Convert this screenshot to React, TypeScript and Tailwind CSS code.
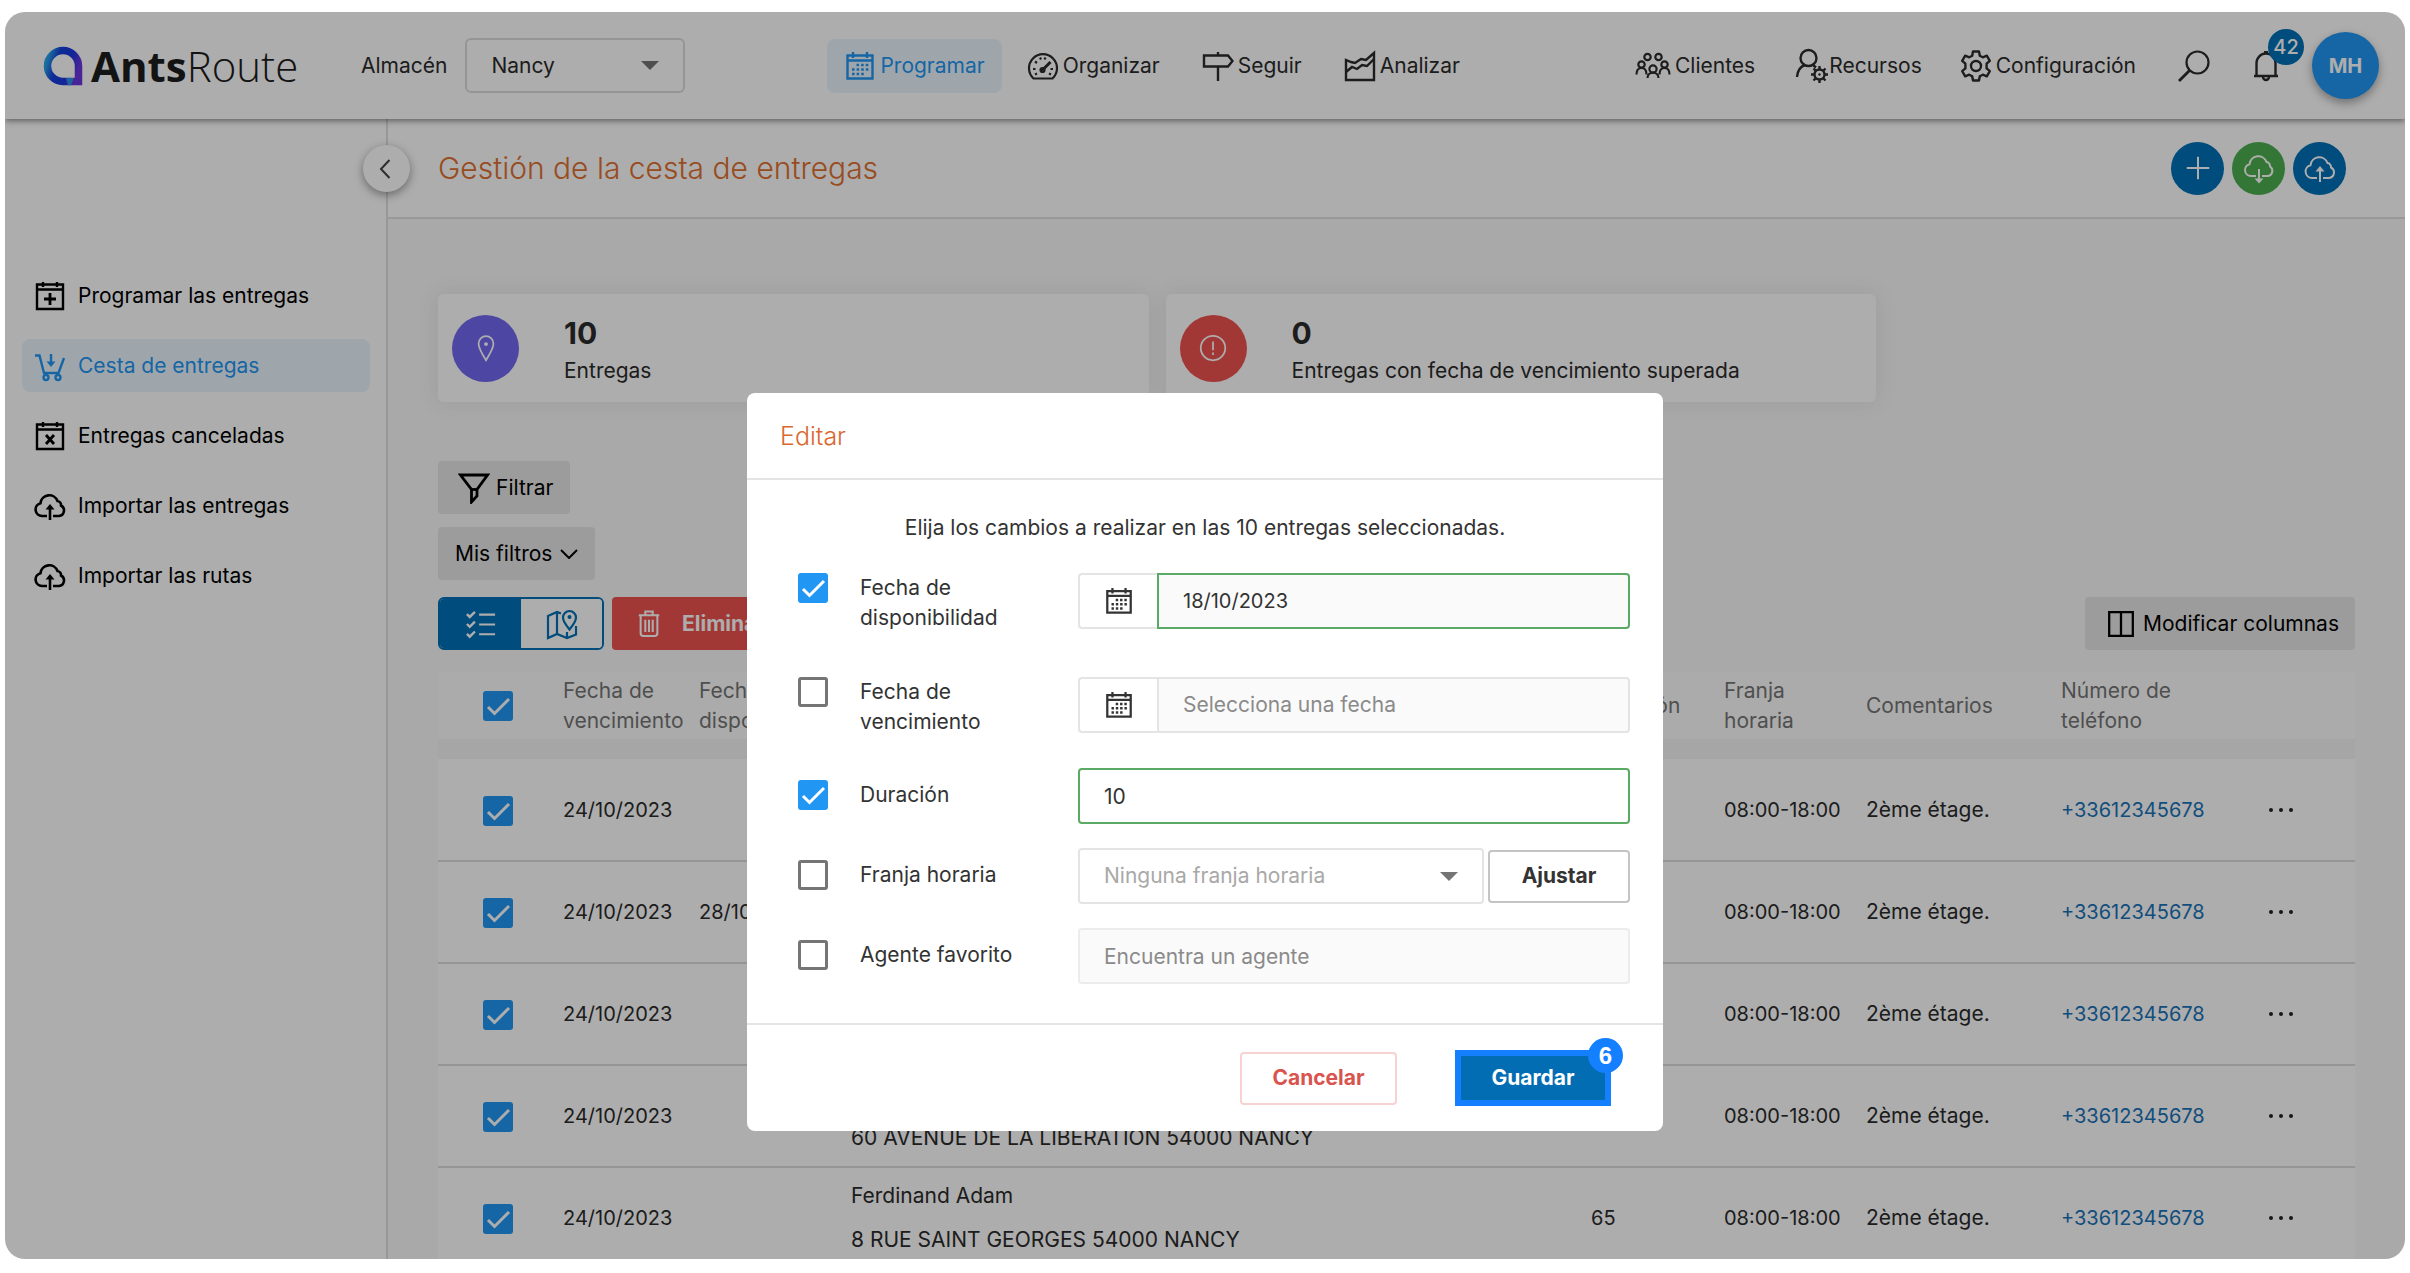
import { useState } from "react";
import type { ReactNode } from "react";
import clsx from "clsx";

type IconProps = { className?: string };

function Svg({ className, children, box = "0 0 32 32", width = 2.4 }: IconProps & { children: ReactNode; box?: string; width?: number }) {
  return (
    <svg viewBox={box} fill="none" stroke="currentColor" strokeWidth={width} className={clsx("shrink-0", className)} aria-hidden="true">
      {children}
    </svg>
  );
}

const CalendarIcon = ({ className }: IconProps) => (
  <Svg className={className}>
    <path d="M3.5 5.5h25v23h-25zM3.5 10.5h25" />
    <path d="M9 2v6M23 2v6" />
    <path d="M12.5 15h13M8 19.500h17.500M8 24h13" strokeWidth="2.6" strokeDasharray="2.600 2" />
  </Svg>
);

const CalendarPlusIcon = ({ className }: IconProps) => (
  <Svg className={className}>
    <path d="M3 4.500h26v24.500h-26zM3 9.500h26M9 2v5M23 2v5" />
    <path d="M16 13v12M10 19h12" strokeWidth="2.800" />
  </Svg>
);

const CalendarCrossIcon = ({ className }: IconProps) => (
  <Svg className={className}>
    <path d="M3 4.500h26v24.500h-26zM3 9.500h26M9 2v5M23 2v5" />
    <path d="M12 15l8 9M20 15l-8 9" strokeWidth="2.800" />
  </Svg>
);

const CartIcon = ({ className }: IconProps) => (
  <Svg className={className}>
    <path d="M1 5.500h4.500L10 23h14.500L30 8" />
    <path d="M17 4v11" />
    <path d="M12.500 11.500h9L17 17z" fill="currentColor" stroke="none" />
    <circle cx="12" cy="27.500" r="2.500" />
    <circle cx="24" cy="27.500" r="2.500" />
  </Svg>
);

const CloudUpIcon = ({ className, thin }: IconProps & { thin?: boolean }) => (
  <Svg className={className} width={thin ? 2 : 2.6}>
    <path d="M13 26H8a6.500 6.500 0 0 1-1.500-12.800A8.800 8.800 0 0 1 23.500 11a4 4 0 0 1 3.500 4.500A5.600 5.600 0 0 1 25 26h-6" />
    <path d="M16 30V16" />
    <path d="M11.500 19.500L16 14l4.500 5.500z" fill="currentColor" stroke="none" />
  </Svg>
);

const CloudDownIcon = ({ className }: IconProps) => (
  <Svg className={className} width={2}>
    <path d="M13 24H8a6 6 0 0 1-1.500-11.800A8.800 8.800 0 0 1 23.500 10a4 4 0 0 1 3.500 4.500A5.200 5.200 0 0 1 25 24h-6" />
    <path d="M16 17v11" />
    <path d="M11.500 26.500h9L16 31.500z" fill="currentColor" stroke="none" />
  </Svg>
);

const GaugeIcon = ({ className }: IconProps) => (
  <Svg className={className} width={2.2}>
    <path d="M6.500 28.500A14 14 0 1 1 25.500 28.500z" strokeLinejoin="round" />
    <path d="M6 19h2.500M8 11.500l2 1.500M13 7.500l1 2M18.500 7.500l-1 2M26 19h-2.500M8 24.500l2-1M24 24.500l-2-1" />
    <path d="M15 20.500L23.500 12" strokeWidth="3" />
    <circle cx="15.500" cy="20" r="2" fill="currentColor" />
  </Svg>
);

const SignIcon = ({ className }: IconProps) => (
  <Svg className={className} width={2.4}>
    <path d="M2 5.500h24l4.500 5.500-4.500 5.500h-24z" />
    <path d="M16 2v4M16 17v14" />
  </Svg>
);

const ChartIcon = ({ className }: IconProps) => (
  <Svg className={className} width={2.4}>
    <path d="M2 10v20h28V3l-8 7-5-1-6 4-4-1z" />
    <path d="M2 22l6-5 5 2 5-4 5 1 7-7" />
  </Svg>
);

const PeopleIcon = ({ className }: IconProps) => (
  <Svg className={className} box="0 0 36 28" width={2.2}>
    <circle cx="12.500" cy="5" r="3.200" />
    <circle cx="23.500" cy="5" r="3.200" />
    <circle cx="6.500" cy="12.500" r="3.200" />
    <circle cx="29.500" cy="12.500" r="3.200" />
    <circle cx="18" cy="17" r="3.600" />
    <path d="M1.500 22.500c0-4 2-6.500 5-6.500s5 2.500 5 6.500M24.500 22.500c0-4 2-6.500 5-6.500s5 2.500 5 6.500M12.500 26c0-3.500 2.500-5.400 5.500-5.400s5.500 1.900 5.500 5.400" />
  </Svg>
);

const UserGearIcon = ({ className }: IconProps) => (
  <Svg className={className} box="0 0 34 36" width={2.4}>
    <circle cx="13.500" cy="10" r="8" />
    <path d="M2 29c.5-6 3.500-10.500 8-12M18 17l3 2.500" />
    <circle cx="24.500" cy="26.500" r="5" />
    <circle cx="24.500" cy="26.500" r="1.200" fill="currentColor" stroke="none" />
    <path d="M24.500 18v3M24.500 32v3M16 26.500h3M30 26.500h3M18.500 20.500l2 2M28.500 30.500l2 2M30.500 20.500l-2 2M20.500 30.500l-2 2" />
  </Svg>
);

const GearIcon = ({ className }: IconProps) => (
  <Svg className={className} width={2.4}>
    <path
      d="M13 1.500h6l.8 4.200 3 1.600 4-1.600 3 5.100-3.200 2.800v4.800l3.200 2.800-3 5.100-4-1.600-3 1.600-.8 4.200h-6l-.8-4.200-3-1.600-4 1.600-3-5.100 3.200-2.800v-4.800l-3.200-2.800 3-5.100 4 1.600 3-1.600z"
      strokeLinejoin="round"
    />
    <circle cx="16" cy="16" r="5" />
  </Svg>
);

const SearchIcon = ({ className }: IconProps) => (
  <Svg className={className} width={2.2}>
    <circle cx="19.500" cy="12.500" r="11" />
    <path d="M11.500 20.500L1 31" strokeWidth="2.800" />
  </Svg>
);

const BellIcon = ({ className }: IconProps) => (
  <Svg className={className} width={2.4}>
    <path d="M4 26h24M6.500 26V13a9.500 9.500 0 0 1 19 0v13" />
    <path d="M16 1v3" strokeWidth="4" />
    <path d="M13 27a3 3 0 1 0 6 0" />
  </Svg>
);

const FunnelIcon = ({ className }: IconProps) => (
  <Svg className={className} width={2.8}>
    <path d="M2.500 3h27L19 17.500V24l-5.500 6V17.500z" />
    <path d="M13.500 17.500H19" />
  </Svg>
);

const ListIcon = ({ className }: IconProps) => (
  <Svg className={className} width={2.6}>
    <path d="M1 5.500l3 3L9.500 3M1 16l3 3 5.500-5.500M1 26.500l3 3L9.500 24" />
    <path d="M14 6h17M14 16.500h17M14 27h17" strokeWidth="2.200" />
  </Svg>
);

const MapIcon = ({ className }: IconProps) => (
  <Svg className={className} width={2.2}>
    <path d="M15 5.500l-4-1.500-9 4v22l9-4 10 4 9-3.500V18M11 4v22M21 30v-6" />
    <path d="M23.500 21.500C19 16 17 12.500 17 9.500a6.500 6.500 0 0 1 13 0c0 3-2 6.500-6.500 12z" />
    <circle cx="23.500" cy="9" r="2" fill="currentColor" stroke="none" />
  </Svg>
);

const TrashIcon = ({ className }: IconProps) => (
  <Svg className={className} box="0 0 28 32" width={2.2}>
    <path d="M3 6.500h22M10 6V2.500h8V6M5 7v19a3 3 0 0 0 3 3h12a3 3 0 0 0 3-3V7" />
    <path d="M10 11.500v13M14 11.500v13M18 11.500v13" />
  </Svg>
);

const PinIcon = ({ className }: IconProps) => (
  <Svg className={className} width={2}>
    <path d="M16 30C10.500 21 7.500 16 7.500 11a8.500 8.500 0 0 1 17 0c0 5-3 10-8.500 19z" />
    <circle cx="16" cy="11.500" r="2.200" fill="currentColor" stroke="none" />
  </Svg>
);

const AlertIcon = ({ className }: IconProps) => (
  <Svg className={className} width={2}>
    <circle cx="16" cy="16" r="14" />
    <path d="M16 8.500v10M16 21v3" />
  </Svg>
);

const ColumnsIcon = ({ className }: IconProps) => (
  <Svg className={className} width={2.6}>
    <path d="M2.500 2.500h27v27h-27zM16 2.500v27" />
  </Svg>
);

function Logo() {
  return (
    <a href="#" className="flex w-[318px] items-center gap-2 text-[#1c1c1c]">
      <svg viewBox="0 0 40 40" className="size-10 shrink-0" aria-hidden="true">
        <defs>
          <linearGradient id="ring" x1="0" y1="0.3" x2="1" y2="0.6">
            <stop offset="0" stopColor="#2a9fe8" />
            <stop offset="0.300" stopColor="#1440dc" />
            <stop offset="0.700" stopColor="#1a38e0" />
            <stop offset="1" stopColor="#6a35e0" />
          </linearGradient>
        </defs>
        <path d="M20 4.500A15.500 15.500 0 0 0 20 35.500H35.500V20A15.500 15.500 0 0 0 20 4.500z" fill="none" stroke="url(#ring)" strokeWidth="7.500" />
        <path d="M23 32h8l-3 7.200h-3z" fill="#2f8fe6" />
      </svg>
      <span className="font-['Open_Sans'] text-[42px] leading-none font-bold">
        Ants<span className="font-light">Route</span>
      </span>
    </a>
  );
}

const Caret = ({ className }: IconProps) => (
  <svg viewBox="0 0 18 9" className={clsx("pointer-events-none h-[9px] w-[18px]", className)} aria-hidden="true">
    <path d="M0 0h18l-9 9z" fill="#757575" />
  </svg>
);

function Checkbox({ id, label, defaultChecked }: { id: string; label?: string; defaultChecked?: boolean }) {
  return (
    <span className="relative inline-block size-[30px] shrink-0 align-middle">
      <input
        id={id}
        type="checkbox"
        aria-label={label}
        defaultChecked={defaultChecked}
        className="peer block size-[30px] appearance-none rounded-[3px] border-3 border-[#757575] checked:border-[#2196f3] checked:bg-[#2196f3]"
      />
      <svg viewBox="0 0 30 30" className="pointer-events-none absolute inset-0 hidden peer-checked:block" aria-hidden="true">
        <path d="M5 16l6.500 6.500L26 8" fill="none" stroke="#fff" strokeWidth="3" />
      </svg>
    </span>
  );
}

const mainNav = [
  { label: "Programar", icon: CalendarIcon, active: true },
  { label: "Organizar", icon: GaugeIcon },
  { label: "Seguir", icon: SignIcon },
  { label: "Analizar", icon: ChartIcon },
];

const sideNav = [
  { label: "Programar las entregas", icon: CalendarPlusIcon },
  { label: "Cesta de entregas", icon: CartIcon, active: true },
  { label: "Entregas canceladas", icon: CalendarCrossIcon },
  { label: "Importar las entregas", icon: CloudUpIcon },
  { label: "Importar las rutas", icon: CloudUpIcon },
];

const deliveries = [
  { due: "24/10/2023" },
  { due: "24/10/2023", available: "28/10/2023" },
  { due: "24/10/2023" },
  { due: "24/10/2023", address: "60 AVENUE DE LA LIBERATION 54000 NANCY" },
  { due: "24/10/2023", name: "Ferdinand Adam", address: "8 RUE SAINT GEORGES 54000 NANCY", duration: "65" },
];

function Header() {
  return (
    <header className="relative z-10 flex h-[107px] shrink-0 items-center bg-white pr-[26px] pl-[38px] shadow-[0_2px_6px_rgba(0,0,0,0.45)]">
      <Logo />
      <label htmlFor="warehouse" className="mr-[18px]">Almacén</label>
      <div className="relative mr-[142px]">
        <select id="warehouse" className="h-[55px] w-[220px] appearance-none rounded-md border-2 border-[#dcdcdc] bg-white pl-6">
          <option>Nancy</option>
        </select>
        <Caret className="absolute top-[23px] right-[26px]" />
      </div>
      <nav className="flex items-center gap-2">
        {mainNav.map(({ label, icon: Icon, active }) => (
          <a
            key={label}
            href="#"
            className={clsx("flex h-[54px] items-center gap-1 rounded-lg px-[17px]", active && "bg-[#ebf5fd] text-[#2196f3]")}
          >
            <Icon className="size-8" />
            {label}
          </a>
        ))}
      </nav>
      <nav className="ml-auto flex items-center">
        <a href="#" className="mr-10 flex items-center gap-1"><PeopleIcon className="h-7 w-9" />Clientes</a>
        <a href="#" className="mr-[38px] flex items-center"><UserGearIcon className="h-9 w-[34px]" />Recursos</a>
        <a href="#" className="mr-[42px] flex items-center gap-1"><GearIcon className="size-8" />Configuración</a>
      </nav>
      <button aria-label="Buscar" className="mr-10"><SearchIcon className="size-8" /></button>
      <button aria-label="Notificaciones" className="relative mr-[30px]">
        <BellIcon className="size-8" />
        <span className="absolute -top-[21px] -right-[22px] flex size-9 items-center justify-center rounded-full bg-[#0170b7] text-xl font-medium text-white">42</span>
      </button>
      <button className="size-[67px] rounded-full bg-[#2196f3] text-xl font-bold text-white shadow-[0_4px_10px_rgba(0,0,0,0.35)]">MH</button>
    </header>
  );
}

function Sidebar() {
  return (
    <aside className="relative w-[383px] shrink-0 border-r-2 border-[#e0e0e0] bg-white pt-[150px] pr-4 pl-[17px]">
      <button
        aria-label="Contraer"
        className="absolute top-[26px] -right-6 z-10 flex size-[47px] items-center justify-center rounded-full bg-white shadow-[0_3px_10px_rgba(0,0,0,0.4)]"
      >
        <svg viewBox="0 0 12 20" className="mr-1 h-5 w-3" fill="none" stroke="#444" strokeWidth="2"><path d="M10.500 1L2 10l8.500 9" /></svg>
      </button>
      <nav className="flex flex-col gap-[17px]">
        {sideNav.map(({ label, icon: Icon, active }) => (
          <a
            key={label}
            href="#"
            className={clsx("flex h-[53px] items-center gap-3 rounded-lg pl-3", active ? "bg-[#ebf5fd] text-[#2196f3]" : "text-black")}
          >
            <Icon className="size-8" />
            {label}
          </a>
        ))}
      </nav>
    </aside>
  );
}

function StatCard({ icon, value, label, color }: { icon: ReactNode; value: string; label: string; color: string }) {
  return (
    <div className="flex h-[108px] items-center rounded-md bg-white pl-[14px] shadow-[0_0_24px_rgba(0,0,0,0.08)]">
      <div className={clsx("flex size-[67px] items-center justify-center rounded-full text-white", color)}>{icon}</div>
      <div className="ml-[45px] pt-2">
        <div className="mb-[2px] text-3xl leading-9 font-bold">{value}</div>
        <div className="leading-9">{label}</div>
      </div>
    </div>
  );
}

function DeliveryTable() {
  return (
    <table className="mt-[22px] w-full table-fixed text-left">
      <colgroup>
        <col className="w-[125px]" />
        <col className="w-[136px]" />
        <col className="w-[152px]" />
        <col />
        <col className="w-[133px]" />
        <col className="w-[142px]" />
        <col className="w-[195px]" />
        <col className="w-[206px]" />
        <col className="w-[88px]" />
      </colgroup>
      <thead>
        <tr className="h-[67px] bg-[#fdfdfd] leading-[30px] text-[#757575] *:font-normal">
          <th className="pl-[45px]"><Checkbox id="all" label="Seleccionar todo" defaultChecked /></th>
          <th>Fecha de<br />vencimiento</th>
          <th>Fecha de<br />disponibilidad</th>
          <th />
          <th>Duración</th>
          <th>Franja<br />horaria</th>
          <th>Comentarios</th>
          <th>Número de<br />teléfono</th>
          <th />
        </tr>
      </thead>
      <tbody>
        <tr className="h-5 bg-[#f5f5f5]"><td colSpan={9} /></tr>
        {deliveries.map((d, i) => (
          <tr key={i} className="h-[102px] border-b-2 border-[#dcdcdc] bg-white">
            <td className="pl-[45px]"><Checkbox id={`row-${i}`} label={`Seleccionar entrega ${i + 1}`} defaultChecked /></td>
            <td className="text-xl">{d.due}</td>
            <td className="text-xl">{d.available}</td>
            <td className="leading-[44px] whitespace-nowrap">
              <div className="h-11">{d.name}</div>
              <div className="h-11">{d.address}</div>
            </td>
            <td className="text-xl">{d.duration}</td>
            <td className="text-xl">08:00-18:00</td>
            <td>2ème étage.</td>
            <td className="text-xl"><a href="tel:+33612345678" className="text-[#1a73b8]">+33612345678</a></td>
            <td>
              <button aria-label="Acciones" className="block">
                <svg viewBox="0 0 28 6" className="h-[6px] w-7" fill="#222"><circle cx="4" cy="3" r="2" /><circle cx="14" cy="3" r="2" /><circle cx="24" cy="3" r="2" /></svg>
              </button>
            </td>
          </tr>
        ))}
      </tbody>
    </table>
  );
}

const greyButton = "flex h-[53px] items-center rounded-sm bg-[#e6e6e6] text-black";

function Basket() {
  const [view, setView] = useState("list");

  return (
    <main className="flex min-w-0 flex-1 flex-col bg-[#f9f9f9]">
      <div className="flex h-[100px] shrink-0 items-center gap-2 border-b-2 border-[#e0e0e0] bg-white pr-[59px] pl-[50px]">
        <h1 className="mr-auto text-3xl font-light text-[#e0702f]">Gestión de la cesta de entregas</h1>
        <button aria-label="Añadir" className="flex size-[53px] items-center justify-center rounded-full bg-[#0170b7] text-white">
          <Svg className="size-6" width={2.6}><path d="M16 1v30M1 16h30" /></Svg>
        </button>
        <button aria-label="Descargar" className="flex size-[53px] items-center justify-center rounded-full bg-[#4caf50] text-white"><CloudDownIcon className="size-8" /></button>
        <button aria-label="Subir" className="flex size-[53px] items-center justify-center rounded-full bg-[#0170b7] text-white"><CloudUpIcon thin className="size-8" /></button>
      </div>

      <div className="pt-[75px] pr-[50px] pl-[50px]">
        <div className="grid grid-cols-[40fr_40fr_26fr] gap-[17px]">
          <StatCard icon={<PinIcon className="size-7" />} value="10" label="Entregas" color="bg-[#7367f0]" />
          <StatCard icon={<AlertIcon className="size-7" />} value="0" label="Entregas con fecha de vencimiento superada" color="bg-[#ef5350]" />
        </div>

        <div className="mt-[59px] flex flex-col items-start gap-[13px]">
          <button className={clsx(greyButton, "gap-[6px] pr-[17px] pl-5")}><FunnelIcon className="size-8" />Filtrar</button>
          <button className={clsx(greyButton, "gap-2 px-[17px]")}>
            Mis filtros
            <svg viewBox="0 0 18 10" className="h-[10px] w-[18px]" fill="none" stroke="currentColor" strokeWidth="2"><path d="M1 1l8 8 8-8" /></svg>
          </button>
        </div>

        <div className="mt-[17px] flex">
          <div className="mr-2 flex h-[53px] w-[166px] overflow-hidden rounded-md border-2 border-[#0170b7]">
            <button
              aria-label="Lista"
              onClick={() => setView("list")}
              className={clsx("flex flex-1 items-center justify-center", view === "list" ? "bg-[#0170b7] text-white" : "text-[#0170b7]")}
            >
              <ListIcon className="size-[30px]" />
            </button>
            <button
              aria-label="Mapa"
              onClick={() => setView("map")}
              className={clsx("flex flex-1 items-center justify-center", view === "map" ? "bg-[#0170b7] text-white" : "bg-white text-[#0170b7]")}
            >
              <MapIcon className="size-8" />
            </button>
          </div>
          <button className="flex h-[53px] items-center gap-5 rounded-sm bg-[#ef5350] px-6 font-bold text-white"><TrashIcon className="h-[30px] w-[26px]" />Eliminar</button>
          <button className={clsx(greyButton, "ml-auto gap-2 pr-4 pl-[22px]")}><ColumnsIcon className="size-7" />Modificar columnas</button>
        </div>

        <DeliveryTable />
      </div>
    </main>
  );
}

function DateField({ id, value, placeholder }: { id: string; value?: string; placeholder?: string }) {
  return (
    <div className="flex h-14 flex-1">
      <button aria-label="Abrir calendario" className="flex w-[79px] items-center justify-center rounded-l border-2 border-r-0 border-[#e4e4e4]">
        <CalendarIcon className="size-[30px]" />
      </button>
      <input
        id={id}
        type="text"
        aria-label="Fecha"
        defaultValue={value}
        placeholder={placeholder}
        className={clsx("min-w-0 flex-1 rounded-r border-2 bg-[#fafafa] px-6 text-xl placeholder:text-[21px] placeholder:text-[#8a8a8a]", value ? "border-[#5aa964]" : "border-[#e4e4e4]")}
      />
    </div>
  );
}

function FieldRow({ id, label, checked, tall, className, children }: { id: string; label: ReactNode; checked?: boolean; tall?: boolean; className?: string; children: ReactNode }) {
  return (
    <div className={clsx("flex items-start", className)}>
      <div className={clsx("flex w-[280px] items-start gap-8", !tall && "pt-3")}>
        <Checkbox id={`${id}-on`} defaultChecked={checked} />
        <label htmlFor={`${id}-on`} className="leading-[30px]">{label}</label>
      </div>
      {children}
    </div>
  );
}

function EditDialog() {
  return (
    <div role="dialog" aria-labelledby="edit-title" className="w-[916px] rounded-lg bg-white text-[#333]">
      <h2 id="edit-title" className="flex h-[87px] items-center border-b-2 border-[#e4e4e4] px-[33px] pt-[2px] text-[25px] font-light text-[#d9682f]">Editar</h2>
      <div className="pt-[33px] pr-[33px] pb-[39px] pl-[51px]">
        <p className="mb-[30px] pr-[18px] text-center leading-[30px]">Elija los cambios a realizar en las 10 entregas seleccionadas.</p>
        <FieldRow id="available" label={<>Fecha de<br />disponibilidad</>} checked tall className="mb-11">
          <DateField id="available" value="18/10/2023" />
        </FieldRow>
        <FieldRow id="due" label={<>Fecha de<br />vencimiento</>} tall className="mb-[31px]">
          <DateField id="due" placeholder="Selecciona una fecha" />
        </FieldRow>
        <FieldRow id="duration" label="Duración" checked className="mb-6">
          <input aria-label="Duración" defaultValue="10" className="h-14 min-w-0 flex-1 rounded border-2 border-[#5aa964] px-6" />
        </FieldRow>
        <FieldRow id="slot" label="Franja horaria" className="mb-6">
          <div className="flex flex-1 items-center gap-1">
            <div className="relative flex-1">
              <select aria-label="Franja horaria" className="h-14 w-full appearance-none rounded border-2 border-[#e4e4e4] bg-white px-6 text-[#a8a8a8]">
                <option>Ninguna franja horaria</option>
              </select>
              <Caret className="absolute top-6 right-[26px]" />
            </div>
            <button className="h-[53px] w-[142px] rounded border-2 border-[#c4c4c4] font-bold">Ajustar</button>
          </div>
        </FieldRow>
        <FieldRow id="agent" label="Agente favorito">
          <input aria-label="Agente favorito" placeholder="Encuentra un agente" className="h-14 min-w-0 flex-1 rounded border-2 border-[#ececec] bg-[#fafafa] px-6 placeholder:text-[#8a8a8a]" />
        </FieldRow>
      </div>
      <div className="flex h-[108px] items-center justify-end gap-[58px] border-t-2 border-[#e4e4e4] pr-[52px]">
        <button className="h-[53px] w-[157px] rounded-sm border-2 border-[#f6d2d0] font-bold text-[#d9534f]">Cancelar</button>
        <button className="relative h-14 w-[156px] border-6 border-[#1480ff] bg-[#026db3] font-bold text-white">
          Guardar
          <span className="absolute -top-[18px] -right-[18px] flex size-[35px] items-center justify-center rounded-full bg-[#1480ff] font-['Liberation_Sans'] text-2xl">6</span>
        </button>
      </div>
    </div>
  );
}

export default function App() {
  return (
    <div className="h-screen bg-white px-[5px] pt-3 pb-[14px] font-[Inter,sans-serif] text-[21px] text-[#2b2b2b]">
      <div className="relative flex h-full flex-col overflow-hidden rounded-[20px]">
        <Header />
        <div className="flex min-h-0 flex-1">
          <Sidebar />
          <Basket />
        </div>
        <div className="absolute inset-0 z-20 flex items-start justify-center bg-black/32 pt-[381px]">
          <EditDialog />
        </div>
      </div>
    </div>
  );
}
